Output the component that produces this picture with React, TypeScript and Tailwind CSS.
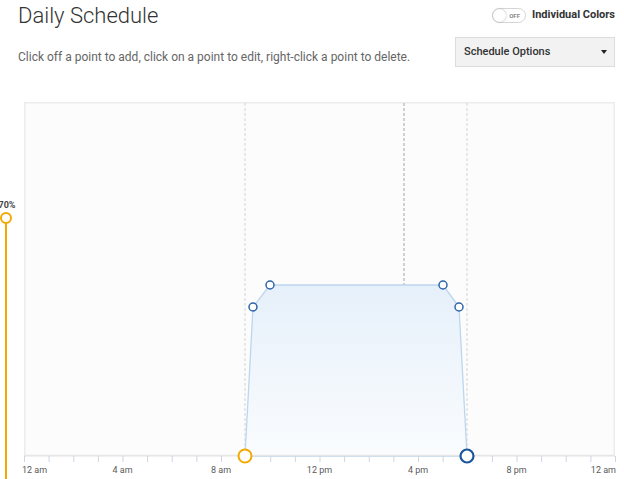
import React from 'react';

const X0 = 24;
const X1 = 615;
const hx = (h: number) => X0 + ((X1 - X0) * h) / 24;

const labels = [
  { h: 0, t: '12 am', anchor: 'start', dx: -2 },
  { h: 4, t: '4 am', anchor: 'middle', dx: 0 },
  { h: 8, t: '8 am', anchor: 'middle', dx: 0 },
  { h: 12, t: '12 pm', anchor: 'middle', dx: 0 },
  { h: 16, t: '4 pm', anchor: 'middle', dx: 0 },
  { h: 20, t: '8 pm', anchor: 'middle', dx: 0 },
  { h: 24, t: '12 am', anchor: 'end', dx: 1 },
];

const points: [number, number][] = [
  [245, 456],
  [253, 307],
  [270, 285],
  [443, 285],
  [459, 307],
  [467, 456],
];

const Toggle: React.FC = () => (
  <div className="relative w-[34px] h-[15px] rounded-full border border-[#d6d6d6] bg-white">
    <div className="absolute left-[0px] top-[0px] w-[13px] h-[13px] rounded-full bg-white shadow-[0_0_2px_rgba(0,0,0,0.35)]" />
    <span className="absolute right-[5px] top-[3px] text-[6px] leading-[7px] font-bold text-[#888]">OFF</span>
  </div>
);

const Chart: React.FC = () => (
  <svg width={600} height={383} viewBox="24 96 600 383" className="block overflow-visible">
    <defs>
      <linearGradient id="fillGrad" x1="0" y1="0" x2="0" y2="1">
        <stop offset="0%" stopColor="#e6f0fa" />
        <stop offset="100%" stopColor="#fafcfe" />
      </linearGradient>
    </defs>
    <rect x={X0 + 0.75} y={102.75} width={X1 - X0 - 1.5} height={353} fill="#fcfcfc" stroke="#ececec" strokeWidth={1.5} />
    <line x1={245} y1={103} x2={245} y2={455} stroke="#d4d4d4" strokeWidth={1} strokeDasharray="3 2" />
    <line x1={467} y1={103} x2={467} y2={455} stroke="#d4d4d4" strokeWidth={1} strokeDasharray="3 2" />
    <line x1={404} y1={103} x2={404} y2={455} stroke="#b3b3b3" strokeWidth={1.2} strokeDasharray="3 2" />
    <polygon
      points={points.map((p) => p.join(',')).join(' ')}
      fill="url(#fillGrad)"
      stroke="#bcd6ee"
      strokeWidth={1.3}
      strokeLinejoin="round"
    />
    <line x1={X0} y1={455.5} x2={X1} y2={455.5} stroke="#e6e6e6" strokeWidth={1.5} />
    {Array.from({ length: 25 }).map((_, i) => (
      <line key={i} x1={hx(i) + 0.5} y1={456} x2={hx(i) + 0.5} y2={462} stroke="#cdd6e2" strokeWidth={1} />
    ))}
    {labels.map((l) => (
      <text
        key={l.t + l.h}
        x={hx(l.h) + l.dx}
        y={473}
        textAnchor={l.anchor as 'start' | 'middle' | 'end'}
        fontSize={9}
        fill="#5a5a5a"
        fontFamily="Roboto, sans-serif"
      >
        {l.t}
      </text>
    ))}
    {points.slice(1, 5).map(([x, y]) => (
      <circle key={x} cx={x} cy={y} r={4} fill="#fff" stroke="#2f65aa" strokeWidth={1.5} />
    ))}
    <circle cx={245} cy={456} r={6.5} fill="#fff" stroke="#f2a900" strokeWidth={2} />
    <circle cx={467} cy={456} r={6.5} fill="#fff" stroke="#1c559b" strokeWidth={2.2} />
  </svg>
);

const Slider: React.FC = () => (
  <svg width={24} height={383} viewBox="0 96 24 383" className="block">
    <line x1={6} y1={223} x2={6} y2={479} stroke="#f2a900" strokeWidth={2} />
    <circle cx={6} cy={218} r={5} fill="#fff" stroke="#f2a900" strokeWidth={2} />
    <text x={7} y={208} textAnchor="middle" fontSize={9} fontWeight={700} fill="#444" fontFamily="Roboto, sans-serif">
      70%
    </text>
  </svg>
);

const App: React.FC = () => {
  return (
    <div className="w-[624px] h-[479px] overflow-hidden bg-white font-['Roboto',sans-serif] text-[#333]">
      <div className="flex h-[96px]">
        <div className="pl-[18px]">
          <h1 className="text-[22px] leading-[26px] font-light text-[#333] mt-[3px]">Daily Schedule</h1>
          <p className="text-[12px] leading-[16px] text-[#666] mt-[20px]">
            Click off a point to add, click on a point to edit, right-click a point to delete.
          </p>
        </div>
        <div className="ml-auto mr-[9px] w-[160px]">
          <div className="flex items-center justify-end gap-[6px] mt-[8px] h-[15px]">
            <Toggle />
            <span className="text-[11px] font-bold text-[#333]">Individual Colors</span>
          </div>
          <div className="mt-[14px] h-[30px] flex items-center justify-between pl-[8px] pr-[7px] bg-[#f2f2f2] border border-[#dcdcdc]">
            <span className="text-[11px] font-medium text-[#333]">Schedule Options</span>
            <span className="w-0 h-0 border-l-[3.5px] border-r-[3.5px] border-t-[4px] border-l-transparent border-r-transparent border-t-[#222]" />
          </div>
        </div>
      </div>
      <div className="flex">
        <Slider />
        <Chart />
      </div>
    </div>
  );
};

export default App;
